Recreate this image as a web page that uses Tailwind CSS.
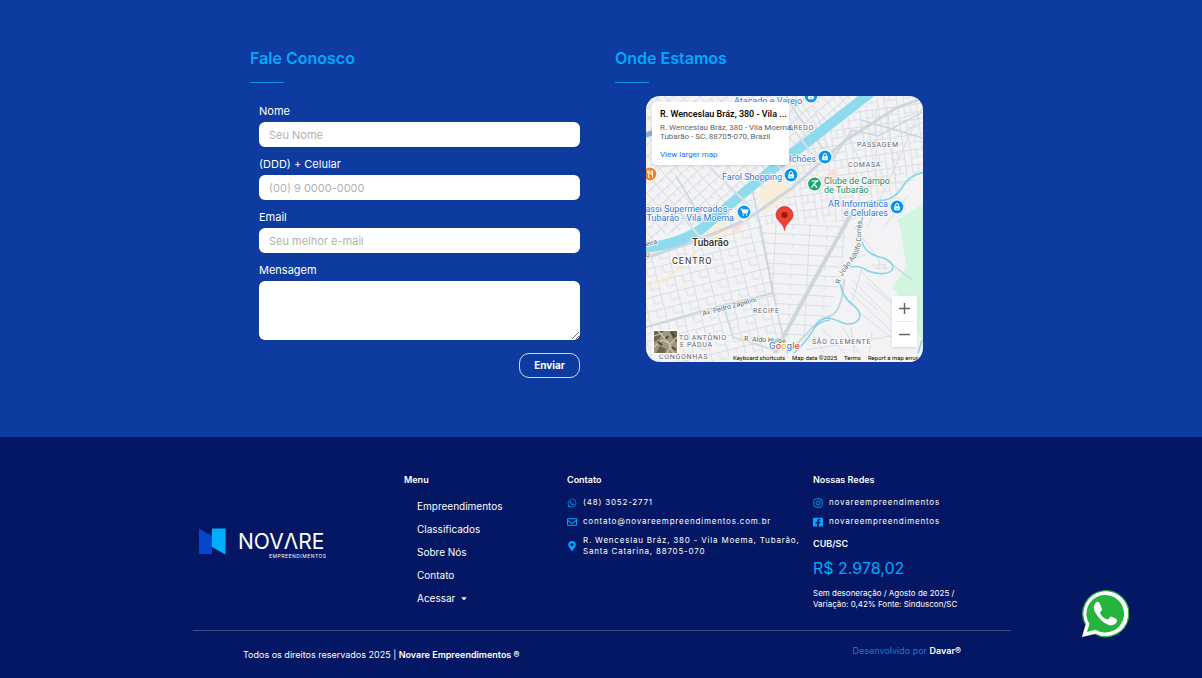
<!DOCTYPE html>
<html lang="pt-BR">
<head>
    <meta charset="UTF-8"/>
    <meta name="viewport" content="width=device-width, initial-scale=1.0"/>
    <title>Novare Empreendimentos</title>
    <script src="https://cdn.jsdelivr.net/npm/@tailwindcss/browser@4"></script>
</head>
<body class="bg-[#031765] min-h-screen flex flex-col text-white font-[Inter,sans-serif]">

<!-- contato + mapa -->
<main class="bg-[#0d3ba0] pt-[46px] pb-[59px]">
    <div class="max-w-[730px] mx-auto grid grid-cols-2">
        <section class="px-[14px]">
            <h2 class="text-[#00a8ff] text-base leading-6 font-semibold">Fale Conosco</h2>
            <div class="w-[34px] h-px bg-[#0796e8] mt-3"></div>

            <form class="mt-5 pl-[9px] pr-[7px] flex flex-col gap-[9px] text-[11px]">
                <div>
                    <label for="nome" class="block leading-4 mb-[3px]">Nome</label>
                    <input id="nome" type="text" class="block w-full h-[25px] px-[10px] rounded-md bg-white text-gray-800 placeholder:text-[#b1b1b1]" placeholder="Seu Nome"/>
                </div>
                <div>
                    <label for="celular" class="block leading-4 mb-[3px]">(DDD) + Celular</label>
                    <input id="celular" type="tel" class="block w-full h-[25px] px-[10px] rounded-md bg-white text-gray-800 placeholder:text-[#b1b1b1]" placeholder="(00) 9 0000-0000"/>
                </div>
                <div>
                    <label for="email" class="block leading-4 mb-[3px]">Email</label>
                    <input id="email" type="email" class="block w-full h-[25px] px-[10px] rounded-md bg-white text-gray-800 placeholder:text-[#b1b1b1]" placeholder="Seu melhor e-mail"/>
                </div>
                <div>
                    <label for="mensagem" class="block leading-4 mb-[3px]">Mensagem</label>
                    <textarea id="mensagem" class="block w-full h-[59px] px-[10px] py-1 rounded-md bg-white text-gray-800 resize-y"></textarea>
                </div>
                <button type="submit" class="self-end mt-1 w-[61px] h-[25px] rounded-[10px] border border-white/80 text-[10px] font-bold">Enviar</button>
            </form>
        </section>

        <section class="px-[14px]">
            <h2 class="text-[#00a8ff] text-base leading-6 font-semibold">Onde Estamos</h2>
            <div class="w-[34px] h-px bg-[#0796e8] mt-3"></div>

            <!-- mapa -->
            <div class="relative w-[277px] h-[266px] mt-[13px] ml-[31px] rounded-[14px] overflow-hidden bg-[#f3f2f4] font-[Roboto,sans-serif]">
                <svg class="w-full h-full" viewBox="0 0 277 266" font-family="Roboto, sans-serif" aria-label="Mapa de Tubarão">
                    <defs>
                        <pattern id="norte" width="13" height="9" patternUnits="userSpaceOnUse" patternTransform="rotate(-42)">
                            <path d="M0 .5H13M.5 0V9M7 0V4" stroke="#d2dae1" stroke-width=".8" fill="none"/>
                        </pattern>
                        <pattern id="centro" width="17" height="14" patternUnits="userSpaceOnUse" patternTransform="rotate(-14)">
                            <path d="M0 .5H17M.5 0V14M9 0V8M9 8H17" stroke="#d2dae1" stroke-width=".8" fill="none"/>
                        </pattern>
                        <pattern id="leste" width="19" height="15" patternUnits="userSpaceOnUse" patternTransform="rotate(-8)">
                            <path d="M0 .5H19M.5 0V15M7 0V15M7 8H19M13 0V8" stroke="#d2dae1" stroke-width=".8" fill="none"/>
                        </pattern>
                        <pattern id="sul" width="34" height="10" patternUnits="userSpaceOnUse" patternTransform="rotate(3)">
                            <path d="M0 .5H34M.5 0V10M18 0V5" stroke="#d2dae1" stroke-width=".8" fill="none"/>
                        </pattern>
                    </defs>
                    <!-- quadras -->
                    <path d="M0 0H218L146 56 56 126 0 146Z" fill="url(#norte)"/>
                    <path d="M0 158L60 133 110 92 130 196 134 266H0Z" fill="url(#centro)"/>
                    <path d="M232 0H277V76L250 98 216 110 208 125 115 129 112 92 150 60Z" fill="url(#leste)"/>
                    <path d="M115 129L202 126 194 187 180 222 150 250 134 244Z" fill="url(#sul)"/>
                    <path d="M112 96L134 78 148 96 118 120Z" fill="#f8edd8"/>
                    <path d="M62 132L78 124 84 138 66 142Z" fill="#f8edd8"/>
                    <path d="M180 78L188 73 194 82 186 86ZM84 128L94 126 95 135 87 137Z" fill="#fadfdb"/>
                    <!-- parque -->
                    <path d="M277 108L251 124 254 132 261 171 246 192 266 214 277 250Z" fill="#d0f6e0"/>
                    <g fill="none" stroke="#d6dee4">
                        <path d="M214 174L252 212M206 184L246 224M204 196L248 238M216 172L208 200 204 210M222 130L276 12M238 131L262 100M168 240L184 266M176 232L206 266M196 230L216 262M205 231L209 266M226 236L222 266M160 254L245 240M220 186L247 208M206 192L232 214M214 217L246 242"/>
                        <path d="M228 172H244M226 169H240M233 165V174M239 166V175M211 162L220 158M207 129L234 165"/>
                        <path d="M148 20L178 70M154 4L190 62M160 0L176 30M198 34L218 72M230 14V84M241 10L250 88M252 24L277 14M250 40L277 26"/>
                    </g>
                    <!-- avenidas -->
                    <g fill="none" stroke="#ccd6de" stroke-linecap="round">
                        <path d="M-4 40L10 36" stroke="#8fabd0" stroke-width="5"/>
                        <path d="M204 120L166 188 126 262" stroke-width="4"/>
                        <path d="M0 162L40 148 62 140 100 124 146 92 200 44 250 12 277 2" stroke-width="3"/>
                        <path d="M114 129L127 197 78 209 0 231" stroke-width="2"/>
                        <path d="M105 88L114 129M77 209L87 241 128 254M127 197L142 262" stroke-width="1.5"/>
                        <path d="M198 184Q196 216 184 220C165 226 160 244 134 262" stroke-width="2"/>
                        <path d="M277 16L232 40 206 34 186 64M140 0L152 20 186 64M215 24L277 42M30 80L60 130M238 162L266 184" stroke-width="1.5"/>
                        <path d="M0 188L20 184M22 182L50 156" stroke="#f8e8c4" stroke-width="2"/>
                    </g>
                    <!-- rio -->
                    <path d="M228 -6L146 58C112 84 84 108 58 131C42 143 20 150 -4 152" fill="none" stroke="#90daee" stroke-width="10"/>
                    <path d="M64 72L104 110M30 113L54 141M124 64L150 84M144 28L166 58" fill="none" stroke="#d9e0e6" stroke-width="2"/>
                    <path d="M279 76C268 78 262 82 257 90C249 104 238 105 226 105C218 106 216 112 216 131M216 146C220 158 230 160 237 162C246 165 249 171 245 175C240 179 230 178 222 175Q214 169 204 171M194 187C196 198 200 204 207 209C216 216 216 224 208 227C198 231 190 222 182 222C170 223 170 230 166 236Q158 248 146 259M168 232Q174 225 184 224M276 244L270 264" fill="none" stroke="#86d5ed" stroke-width="1.6"/>

                    <!-- bairros -->
                    <g fill="#5f6368" font-size="7" letter-spacing=".7" stroke="#fff" stroke-width="1.5" paint-order="stroke">
                        <text x="142" y="34">OREDO</text>
                        <text x="211" y="51">PASSAGEM</text>
                        <text x="202" y="71">COMASA</text>
                        <text x="107" y="217">RECIFE</text>
                        <text x="166" y="248">SÃO CLEMENTE</text>
                        <text x="33" y="244">TO ANTÔNIO</text>
                        <text x="34" y="251">E PÁDUA</text>
                        <text x="13" y="263">CONGONHAS</text>
                    </g>
                    <g fill="#333" stroke="#fff" stroke-width="2" paint-order="stroke">
                        <text x="46" y="150" font-size="10" font-weight="500">Tubarão</text>
                        <text x="26" y="168" font-size="9" letter-spacing="1">CENTRO</text>
                    </g>
                    <!-- ruas -->
                    <g fill="#555c66" font-size="7" stroke="#fff" stroke-width="1.5" paint-order="stroke">
                        <text x="57" y="220" transform="rotate(-15 57 220)">Av. Pedro Zapelini</text>
                        <text x="98" y="245" transform="rotate(3 98 245)">R. Aldo Hulse</text>
                        <text x="-2" y="151" transform="rotate(-14 -2 151)">reira</text>
                        <text x="-2" y="162" transform="rotate(-14 -2 162)">ro</text>
                        <path id="joao" d="M194 188C196 172 215 164 215 144L216 116" fill="none" stroke="none"/>
                        <text><textPath href="#joao">R. João Adolfo Corrêa</textPath></text>
                    </g>
                    <!-- lugares -->
                    <g fill="#2678e0" font-size="9" stroke="#fff" stroke-width="1.5" paint-order="stroke">
                        <text x="88" y="8">Atacado e Varejo</text>
                        <text x="170" y="66" text-anchor="end">Colchões</text>
                        <text x="136" y="84" text-anchor="end">Farol Shopping</text>
                        <text x="86" y="116" text-anchor="end">Giassi Supermercados -</text>
                        <text x="88" y="125" text-anchor="end">Tubarão - Vila Moema</text>
                        <text x="242" y="111" text-anchor="end">AR Informática</text>
                        <text x="242" y="120" text-anchor="end">e Celulares</text>
                        <g fill="#188a5f">
                            <text x="178" y="88">Clube de Campo</text>
                            <text x="178" y="97">de Tubarão</text>
                        </g>
                    </g>
                    <!-- marcadores -->
                    <defs>
                        <g id="pino">
                            <path d="M0 10L-4 6.5A8 8 0 1 1 4 6.5Z" fill="#fff" stroke="#c9ced3" stroke-width=".5"/>
                            <circle r="6.4" fill="currentColor"/>
                        </g>
                        <g id="bolsa">
                            <use href="#pino"/>
                            <path d="M-2.8-.8H2.8V3.2H-2.8Z" fill="#fff"/>
                            <path d="M-1.6-.6V-1.8A1.6 1.6 0 0 1 1.6-1.8V-.6" fill="none" stroke="#fff"/>
                            <path d="M-1 .8A1 1 0 0 0 1 .8" fill="none" stroke="currentColor" stroke-width=".6"/>
                        </g>
                    </defs>
                    <g color="#0b96f5">
                        <use href="#bolsa" x="165" y="0"/>
                        <use href="#bolsa" x="179" y="61"/>
                        <use href="#bolsa" x="145" y="79"/>
                        <use href="#bolsa" x="251" y="111"/>
                        <use href="#pino" x="98" y="116"/>
                        <path d="M94.5 113H96L97 117H101L102 114H96.3" fill="none" stroke="#fff" stroke-width="1.1"/>
                        <path d="M96.3 114H102L101 117H97Z" fill="#fff"/>
                        <circle cx="97.3" cy="119" r=".8" fill="#fff"/>
                        <circle cx="100.7" cy="119" r=".8" fill="#fff"/>
                    </g>
                    <g color="#1ea672">
                        <use href="#pino" x="168.5" y="88"/>
                        <path d="M165.5 85H171L168 88 171 91.5M168 88L165.5 91.5" fill="none" stroke="#fff" stroke-width="1.2"/>
                        <circle cx="171.5" cy="85" r=".9" fill="#fff"/>
                    </g>
                    <g color="#f58220">
                        <use href="#pino" x="4" y="78"/>
                        <path d="M1.5 74.5V76.5A1.3 1.3 0 0 0 4 76.5V74.5M2.7 74.5V82M6.5 82V74.5Q5 75 5 78.5H6.5" fill="none" stroke="#fff" stroke-width=".9"/>
                    </g>
                    <path d="M138.5 134.5C138 127 130 125 130 119A8.5 8.5 0 1 1 147 119C147 125 139 127 138.5 134.5Z" fill="#ea4335" stroke="#c5221f" stroke-width=".6"/>
                    <circle cx="138.5" cy="119" r="3" fill="#a11510"/>
                    <!-- google -->
                    <text x="123" y="253" font-family="Inter, sans-serif" font-size="9" font-weight="500" stroke="#fff" stroke-width="1.5" paint-order="stroke"><tspan fill="#4285f4">G</tspan><tspan fill="#ea4335">o</tspan><tspan fill="#fbbc05">o</tspan><tspan fill="#4285f4">g</tspan><tspan fill="#34a853">l</tspan><tspan fill="#ea4335">e</tspan></text>
                    <!-- miniatura de satélite -->
                    <g>
                        <path d="M6.5 233.5H32V258.5H6.5Z" fill="#fff"/>
                        <path d="M8 235H31V257H8Z" fill="#a1957c"/>
                        <path d="M8 235H18L13 243 8 246ZM24 235H31V247L27 243ZM10 257L14 250 20 253 19 257Z" fill="#6c6655"/>
                        <path d="M8 251L16 244 24 248 31 241M12 235L22 246 27 257M8 240L17 237M21 257L25 249" fill="none" stroke="#cfc5ac" stroke-width="1.3"/>
                        <path d="M25 236L29 241M12 246L16 249M22 240L20 243M26 251L30 254" stroke="#454437" stroke-width="2"/>
                    </g>
                </svg>

                <!-- cartão do endereço -->
                <div class="absolute left-[6px] top-[6px] w-[137px] h-[63px] bg-white rounded-sm shadow pl-2 pt-[6px] whitespace-nowrap">
                    <h3 class="text-[9px] leading-3 font-medium text-black">R. Wenceslau Bráz, 380 - Vila ...</h3>
                    <p class="mt-[3px] text-[8px] leading-[9px] text-[#5f6368]">R. Wenceslau Bráz, 380 - Vila Moema,<br/>Tubarão - SC, 88705-070, Brazil</p>
                    <a href="#" class="block mt-[9px] text-[8px] leading-[10px] text-[#1a73e8]">View larger map</a>
                </div>

                <!-- zoom -->
                <div class="absolute right-[6px] bottom-[15px] w-[25px] bg-white shadow flex flex-col items-center">
                    <button class="w-full h-[25px] flex items-center justify-center" aria-label="Zoom in">
                        <svg class="w-[11px] h-[11px]" viewBox="0 0 11 11"><path d="M5.5 0V11M0 5.5H11" stroke="#666" stroke-width="1.5"/></svg>
                    </button>
                    <div class="w-[19px] h-px bg-[#e6e6e6]"></div>
                    <button class="w-full h-[25px] flex items-center justify-center" aria-label="Zoom out">
                        <svg class="w-[11px] h-[11px]" viewBox="0 0 11 11"><path d="M0 5.5H11" stroke="#666" stroke-width="1.5"/></svg>
                    </button>
                </div>

                <div class="absolute right-0 bottom-0 h-[9px] pl-1 pr-[5px] flex items-center gap-[7px] bg-[#f5f5f5]/80 text-black text-[6px] whitespace-nowrap">
                    <button>Keyboard shortcuts</button>
                    <span>Map data ©2025</span>
                    <a href="#">Terms</a>
                    <a href="#">Report a map error</a>
                </div>
            </div>
        </section>
    </div>
</main>

<!-- rodapé -->
<footer class="flex-grow pt-[35px] pl-[2px]">
    <div class="max-w-[818px] mx-auto">
        <div class="grid grid-cols-[211fr_163fr_246fr_198fr] text-[9px]">
            <a href="#" class="pl-[6px] pt-[56px]" aria-label="Novare Empreendimentos">
                <svg class="w-[128px] h-[31px]" viewBox="0 0 128 31" fill="#fff" font-family="Inter, sans-serif">
                    <path d="M0 .5L13 8V26H0Z" fill="#0646cf"/>
                    <path d="M13 .5H26.5V26.5L13 19Z" fill="#00aeff"/>
                    <text x="39" y="21" font-size="21">NOVΛRE</text>
                    <text x="70" y="29.5" font-size="5" letter-spacing=".5">EMPREENDIMENTOS</text>
                </svg>
            </a>

            <nav>
                <h3 class="font-semibold leading-4">Menu</h3>
                <ul class="mt-[7px] pl-[13px] text-[10px] leading-[23px]">
                    <li><a href="#">Empreendimentos</a></li>
                    <li><a href="#">Classificados</a></li>
                    <li><a href="#">Sobre Nós</a></li>
                    <li><a href="#">Contato</a></li>
                    <li>
                        <a href="#" class="flex items-center gap-[6px]">Acessar
                            <svg class="w-[6px] h-[4px]" viewBox="0 0 6 4"><path d="M.3 .3H5.7L3 3.5Z" fill="#fff"/></svg>
                        </a>
                    </li>
                </ul>
            </nav>

            <div>
                <h3 class="font-semibold leading-4">Contato</h3>
                <ul class="mt-[9px] space-y-2 text-[8px] leading-[11px] tracking-widest">
                    <li>
                        <a href="#" class="flex items-center gap-[6px]">
                            <svg class="w-[10px] h-[10px] shrink-0" viewBox="0 0 448 512" fill="#0096e6"><path d="M380.9 97.1C339 55.1 283.2 32 223.9 32c-122.4 0-222 99.6-222 222 0 39.1 10.2 77.3 29.6 111L0 480l117.7-30.9c32.4 17.7 68.9 27 106.100 27h.1c122.3 0 224.1-99.6 224.1-222 0-59.3-25.2-115-67.1-157zm-157 341.600c-33.2 0-65.7-8.9-94-25.7l-6.7-4-69.8 18.3L72 359.2l-4.4-7c-18.5-29.4-28.2-63.3-28.2-98.2 0-101.7 82.8-184.5 184.600-184.5 49.3 0 95.6 19.2 130.4 54.1 34.8 34.9 56.2 81.2 56.1 130.5 0 101.8-84.9 184.6-186.600 184.6zm101.2-138.2c-5.5-2.8-32.8-16.2-37.9-18-5.1-1.9-8.8-2.8-12.5 2.8-3.7 5.6-14.3 18-17.6 21.8-3.2 3.7-6.5 4.2-12 1.4-32.6-16.3-54-29.1-75.5-66-5.7-9.8 5.7-9.1 16.3-30.3 1.8-3.7.9-6.9-.5-9.7-1.4-2.8-12.5-30.1-17.1-41.2-4.5-10.8-9.1-9.3-12.5-9.5-3.2-.2-6.9-.2-10.6-.2-3.7 0-9.7 1.4-14.8 6.9-5.1 5.6-19.4 19-19.4 46.3 0 27.3 19.9 53.7 22.6 57.4 2.8 3.7 39.1 59.7 94.8 83.8 35.2 15.2 49 16.5 66.6 13.9 10.7-1.6 32.8-13.4 37.4-26.4 4.6-13 4.6-24.1 3.2-26.4-1.3-2.5-5-3.9-10.5-6.6z"/></svg>
                            <span>(48) 3052-2771</span>
                        </a>
                    </li>
                    <li>
                        <a href="#" class="flex items-center gap-[6px]">
                            <svg class="w-[10px] h-[10px] shrink-0" viewBox="0 0 512 512" fill="#00a8ff"><path d="M464 64H48C21.5 64 0 85.5 0 112v288c0 26.5 21.5 48 48 48h416c26.5 0 48-21.5 48-48V112c0-26.5-21.5-48-48-48zm0 48v40.8c-22.4 18.3-58.2 46.7-134.6 106.5-16.8 13.2-50.2 45.1-73.4 44.7-23.2.4-56.6-31.5-73.4-44.7C106.2 199.5 70.4 171.1 48 152.8V112h416zM48 400V214.4c22.9 18.3 55.4 43.9 104.9 82.6 21.9 17.2 60.1 55.2 103.1 55 42.7.2 80.5-37.2 103.1-54.9 49.5-38.8 82-64.4 104.9-82.7V400H48z"/></svg>
                            <span>contato@novareempreendimentos.com.br</span>
                        </a>
                    </li>
                    <li>
                        <a href="#" class="flex items-center gap-[6px]">
                            <svg class="w-[10px] h-[10px] shrink-0" viewBox="0 0 384 512" fill="#00a8ff"><path d="M172.3 501.7C27 291 0 269.4 0 192 0 86 86 0 192 0s192 86 192 192c0 77.4-27 99-172.3 309.7-9.5 13.8-29.9 13.8-39.4 0zM192 272c44.2 0 80-35.8 80-80s-35.8-80-80-80-80 35.8-80 80 35.8 80 80 80z"/></svg>
                            <span>R. Wenceslau Bráz, 380 - Vila Moema, Tubarão,<br/>Santa Catarina, 88705-070</span>
                        </a>
                    </li>
                </ul>
            </div>

            <div>
                <h3 class="font-semibold leading-4">Nossas Redes</h3>
                <ul class="mt-[9px] space-y-2 text-[8px] leading-[11px] tracking-widest">
                    <li>
                        <a href="#" class="flex items-center gap-[6px]">
                            <svg class="w-[10px] h-[10px] shrink-0" viewBox="0 0 20 20" fill="none" stroke="#0096e6" stroke-width="2"><rect x="1.5" y="1.5" width="17" height="17" rx="5"/><circle cx="10" cy="10" r="4"/><circle cx="15" cy="5" r="1" fill="#0096e6" stroke="none"/></svg>
                            <span>novareempreendimentos</span>
                        </a>
                    </li>
                    <li>
                        <a href="#" class="flex items-center gap-[6px]">
                            <svg class="w-[10px] h-[10px] shrink-0" viewBox="0 0 448 512" preserveAspectRatio="none" fill="#00a8ff"><path d="M400 32H48A48 48 0 0 0 0 80v352a48 48 0 0 0 48 48h137.3V327.7h-63V256h63v-54.6c0-62.2 37-96.5 93.7-96.5 27.1 0 55.5 4.8 55.5 4.8v61h-31.3c-30.8 0-40.4 19.1-40.4 38.7V256h68.8l-11 71.7h-57.8V480H400a48 48 0 0 0 48-48V80a48 48 0 0 0-48-48z"/></svg>
                            <span>novareempreendimentos</span>
                        </a>
                    </li>
                </ul>
                <h3 class="mt-[9px] font-semibold leading-4">CUB/SC</h3>
                <p class="mt-1 text-base leading-6 text-[#00a8ff]">R$ 2.978,02</p>
                <p class="mt-2 text-[8px] leading-[11px]">Sem desoneração / Agosto de 2025 /<br/>Variação: 0,42% Fonte: Sinduscon/SC</p>
            </div>
        </div>

        <div class="mt-5 border-t border-[#3c4f88] px-[50px] flex justify-between text-[9px] leading-4">
            <p class="pt-4">Todos os direitos reservados 2025 | <span class="font-semibold">Novare Empreendimentos ®</span></p>
            <p class="pt-3 text-[#1c7cc8]">Desenvolvido por <a href="#" class="font-semibold text-white">Davar®</a></p>
        </div>
    </div>
</footer>

<!-- botão flutuante do whatsapp -->
<a href="#" class="fixed right-[73px] bottom-[40px]" aria-label="WhatsApp">
    <svg class="w-[48px] h-[48px]" viewBox="0 0 48 48">
        <path d="M1 47L4.5 34.5A23 23 0 1 1 14 44Z" fill="#fff"/>
        <path d="M4.5 34.5A23 23 0 1 1 14 44" fill="none" stroke="#25b53c" stroke-width="1.2"/>
        <path d="M6 42L8.5 34A18.8 18.8 0 1 1 14.5 39.8Z" fill="#25b53c"/>
        <path d="M18 12.5C17 11.3 15.5 11.7 14.5 13C11 17 13.5 22 17 26.5C21 31.5 26 35.5 30.5 35.3C33.5 35 36 33 36 30.3C36 29.5 35.5 29 31 26.8C29.5 26 29 27 27.5 29C26.7 30 25.8 29.5 24.5 28.8C22 27.5 20 25 19 23C18.7 22.2 20.5 21 21 19.8C21.3 19 19 13.5 18 12.5Z" fill="#fff"/>
    </svg>
</a>
</body>
</html>
